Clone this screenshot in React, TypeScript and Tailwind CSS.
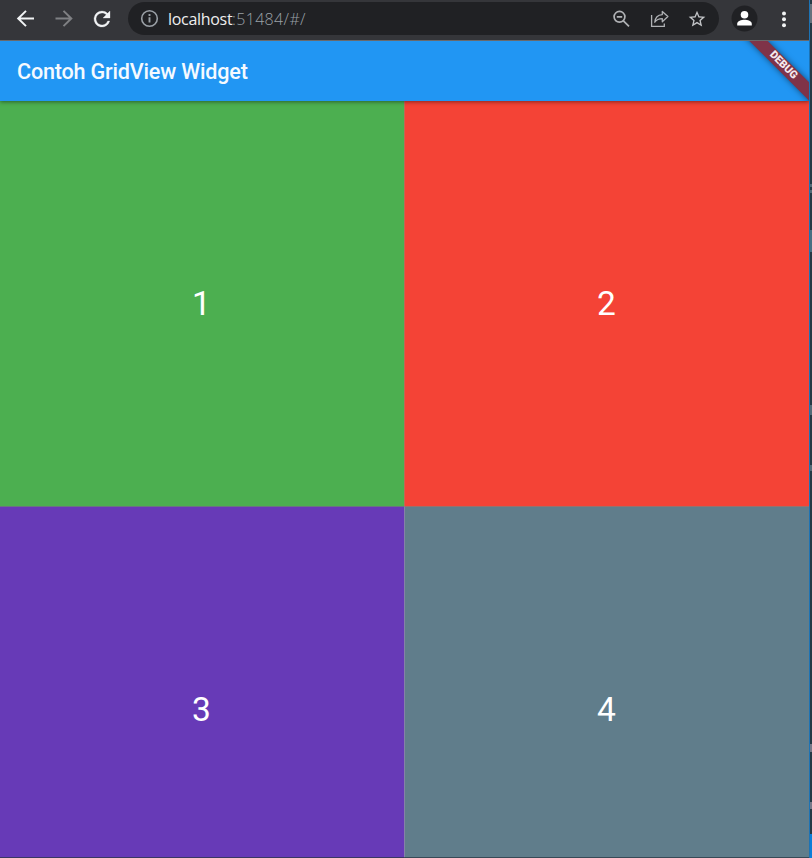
import React from "react";

function Toolbar() {
  return (
    <header className="flex h-[41px] shrink-0 items-start border-b border-[#69696b] bg-[#35363a] pt-[2px]">
      <svg className="ml-[14px] mt-[5px] h-6 w-6 shrink-0" viewBox="0 0 24 24" fill="none" stroke="#f1f3f4" strokeWidth="2">
        <path d="M20 11.5H4.5M12 3.9L4.2 11.5l7.8 7.6" />
      </svg>
      <svg className="ml-[14px] mt-[5px] h-6 w-6 shrink-0" viewBox="0 0 24 24" fill="none" stroke="#7f8083" strokeWidth="2">
        <path d="M3.5 11.5H19M11.5 3.9l7.8 7.6-7.8 7.6" />
      </svg>
      <svg className="ml-[13.5px] mt-[4.5px] h-6 w-6 shrink-0" viewBox="0 0 24 24" fill="#f1f3f4" stroke="#f1f3f4" strokeWidth="0.3">
        <path d="M17.65 6.35A7.96 7.96 0 0 0 12 4a8 8 0 1 0 7.73 10h-2.08A6 6 0 1 1 12 6c1.66 0 3.14.69 4.22 1.78L13 11h7V4l-2.35 2.35z" />
      </svg>
      <div className="ml-[14.5px] flex h-[33px] w-[591px] shrink-0 items-center rounded-full bg-[#202124] pl-[12px] pr-[12px]">
        <svg className="h-[19px] w-[19px]" viewBox="0 0 19 19" fill="none" stroke="#9aa0a6" strokeWidth="1.6">
          <circle cx="9.5" cy="9.5" r="7.8" />
          <path d="M9.5 8.3v5.2M9.5 5v2" strokeWidth="1.9" />
        </svg>
        <div className="ml-[9px] flex whitespace-nowrap font-['Open_Sans','Noto_Sans',sans-serif] text-[16px] leading-6 text-[#9aa0a6]">
          <span className="w-[64px] tracking-[-0.3px] text-[#eeeeef]">localhost</span>
          <span className="font-light tracking-[0.35px]">:51484/#/</span>
        </div>
        <svg className="ml-auto h-5 w-5" viewBox="0 0 20 20" fill="none" stroke="#b0b2b5" strokeWidth="1.7">
          <circle cx="8.5" cy="7.8" r="5.4" />
          <path d="M5.8 7.8h5.4M12.4 11.8l5.6 5.6" />
        </svg>
        <svg className="ml-[18px] h-5 w-5" viewBox="0 0 20 20" fill="none" stroke="#b0b2b5" strokeWidth="1.3">
          <path d="M2.6 6v11.3h12.7v-2.7" />
          <path d="M5.8 13.2c.4-4.7 2.9-7.3 7.5-7.6V2.4l5.6 5.2-5.6 5.1V9.6c-3.4 0-5.7 1-7.5 3.6z" strokeLinejoin="round" />
        </svg>
        <svg className="ml-[18px] h-5 w-5" viewBox="0 0 24 24" fill="#c2c4c7">
          <path d="M22 9.24l-7.19-.62L12 2 9.19 8.63 2 9.24l5.46 4.73L5.82 21 12 17.27 18.18 21l-1.63-7.03L22 9.24zM12 15.4l-3.76 2.27 1-4.28-3.32-2.88 4.38-.38L12 6.1l1.71 4.04 4.38.38-3.32 2.88 1 4.28L12 15.4z" />
        </svg>
      </div>
      <svg className="ml-[12px] mt-[3px] h-[27px] w-[27px] shrink-0" viewBox="0 0 27 27">
        <circle cx="13.5" cy="13.5" r="13" fill="#202124" />
        <g fill="white">
          <circle cx="13.5" cy="9.7" r="3.8" />
          <path d="M6.2 20.5v-1.8c0-2.6 4.3-3.9 7.3-3.9s7.3 1.3 7.3 3.9v1.8z" />
        </g>
      </svg>
      <svg className="ml-[20.5px] mt-[7px] h-5 w-[10px] shrink-0" viewBox="0 0 10 20" fill="#f1f3f4">
        <circle cx="5" cy="4.4" r="2" />
        <circle cx="5" cy="10.2" r="2" />
        <circle cx="5" cy="16.2" r="2" />
      </svg>
    </header>
  );
}

const tiles = [
  { label: "1", style: "bg-[#4caf50]" },
  { label: "2", style: "bg-[#f44336] border-l border-l-[#bd6b54]" },
  { label: "3", style: "bg-[#673ab7] border-t border-t-[#697581]" },
  { label: "4", style: "bg-[#607d8b] border-l border-t border-l-[#8580a8] border-t-[#99706c]" },
];

export default function App() {
  return (
    <div className="flex h-[858px] w-[812px] overflow-hidden bg-[#203442] font-[Roboto,sans-serif]">
      <div className="flex w-[809px] shrink-0 flex-col">
        <Toolbar />
        <main className="relative flex h-[817px] flex-col overflow-hidden">
          <div className="relative z-10 flex h-[60px] shrink-0 items-center bg-[#2196f3] pl-[17px] pt-[2px] shadow-[0_1px_4px_rgba(0,0,0,0.45)]">
            <h1 className="whitespace-nowrap text-[21.6px] font-medium leading-7 tracking-[-0.2px] text-[#f5faff]">Contoh GridView Widget</h1>
          </div>
          <div className="grid h-[810px] shrink-0 grid-cols-[404px_405px] grid-rows-[405px_405px]">
            {tiles.map((tile) => (
              <div
                key={tile.label}
                className={`flex items-center justify-center pt-px pr-px text-[33.5px] text-white ${tile.style}`}
              >
                <span className="leading-10">{tile.label}</span>
              </div>
            ))}
          </div>
          <div className="absolute right-0 top-0 z-20 h-[60px] w-[70px] overflow-hidden">
            <div className="absolute left-[-16px] top-[18.4px] flex h-[13.4px] w-[120px] rotate-45 items-center justify-center bg-[#7f3348] text-[10.8px] font-black leading-none text-[#f5e9ed] shadow-[0_0_6px_rgba(0,0,0,0.5)]">
              DEBUG
            </div>
          </div>
          <div className="absolute bottom-0 left-0 z-20 h-px w-full bg-[#263440]/70" />
        </main>
      </div>
      <div className="w-px bg-[#1c73b5]" />
      <div className="flex w-[2px] flex-col bg-[#253945]">
        <div className="mt-[4px] h-[19px] bg-[#66717c]" />
        <div className="mt-[161px] h-[3px] bg-[#536b78]" />
        <div className="mt-[3px] h-[3px] bg-[#536b78]" />
        <div className="mt-[37px] h-[22px] bg-[#477083]" />
        <div className="mt-[153px] h-[10px] bg-[#536b78]" />
        <div className="mt-[50px] h-[6px] bg-[#536b78]" />
        <div className="mt-[273px] h-[8px] bg-[#777888]" />
        <div className="mt-[50px] h-[7px] bg-[#777888]" />
        <div className="mt-[25px] h-[24px] bg-[#0b7ed8]" />
      </div>
    </div>
  );
}
